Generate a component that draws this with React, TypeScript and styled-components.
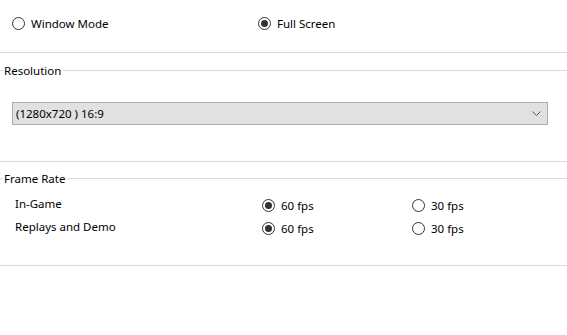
import { createGlobalStyle } from "styled-components";
import styled from "styled-components";

const GlobalStyle = createGlobalStyle`
  html, body {
    margin: 0;
    padding: 0;
    background: #ffffff;
  }
  body {
    font-family: "Noto Sans", "Open Sans", sans-serif;
    font-size: 11.5px;
    color: #000000;
  }
`;

const Page = styled.div`
  width: 567px;
  height: 335px;
  display: flex;
  flex-direction: column;
  background: #ffffff;
`;

const TopRow = styled.div`
  display: grid;
  grid-template-columns: 246px 1fr;
  align-items: center;
  align-content: start;
  height: 52px;
  box-sizing: border-box;
  padding: 17px 0 0 12px;
`;

const Divider = styled.div<{ $gap: number }>`
  height: 1px;
  background: #dadada;
  margin-top: ${(p) => p.$gap}px;
`;

const GroupHeader = styled.div<{ $gap: number }>`
  display: flex;
  align-items: center;
  height: 17px;
  margin-top: ${(p) => p.$gap}px;

  &::before {
    content: "";
    width: 3px;
    height: 1px;
    background: #dadada;
    margin-right: 1px;
  }
  &::after {
    content: "";
    flex: 1;
    height: 1px;
    background: #dadada;
    margin-left: 2px;
  }
`;

const GroupTitle = styled.span`
  line-height: 17px;
  white-space: nowrap;
`;

const RadioOption = styled.label`
  display: flex;
  align-items: center;
  gap: 6px;
  height: 13px;
  line-height: 13px;
  white-space: nowrap;
`;

const RadioCircle = styled.span<{ $checked?: boolean }>`
  width: 13px;
  height: 13px;
  box-sizing: border-box;
  border: 1px solid #333333;
  border-radius: 50%;
  display: flex;
  align-items: center;
  justify-content: center;
  flex: none;

  &::after {
    content: "";
    width: 7px;
    height: 7px;
    border-radius: 50%;
    background: ${(p) => (p.$checked ? "#333333" : "transparent")};
  }
`;

const SelectBox = styled.div`
  margin: 23px 0 0 12px;
  width: 536px;
  height: 23px;
  box-sizing: border-box;
  border: 1px solid #adadad;
  background: #e1e1e1;
  display: flex;
  align-items: center;
  justify-content: space-between;
  padding: 0 4px 0 3px;
`;

const SelectText = styled.span`
  line-height: 21px;
`;

const Chevron = styled.svg`
  width: 9px;
  height: 5px;
  margin-right: 2px;
`;

const FrameRows = styled.div`
  margin-top: 7px;
  display: flex;
  flex-direction: column;
  gap: 1px;
`;

const FrameRow = styled.div`
  display: grid;
  grid-template-columns: 247px 150px 1fr;
  align-items: center;
  height: 22px;
  padding-left: 15px;
`;

const RowLabel = styled.span`
  padding-bottom: 4px;
  white-space: nowrap;
`;

type RadioProps = { label: string; checked?: boolean };

const Radio = ({ label, checked }: RadioProps) => (
  <RadioOption>
    <RadioCircle $checked={checked} />
    <span>{label}</span>
  </RadioOption>
);

const frameRows = [
  { name: "In-Game", value: 60 },
  { name: "Replays and Demo", value: 60 },
];

export default function App() {
  return (
    <Page>
      <GlobalStyle />
      <TopRow>
        <Radio label="Window Mode" />
        <Radio label="Full Screen" checked />
      </TopRow>
      <Divider $gap={0} />

      <GroupHeader $gap={9}>
        <GroupTitle>Resolution</GroupTitle>
      </GroupHeader>
      <SelectBox>
        <SelectText>(1280x720 ) 16:9</SelectText>
        <Chevron viewBox="0 0 9 5">
          <path d="M0.5 0.5 L4.5 4.5 L8.5 0.5" fill="none" stroke="#555555" strokeWidth="1" />
        </Chevron>
      </SelectBox>
      <Divider $gap={36} />

      <GroupHeader $gap={8}>
        <GroupTitle>Frame Rate</GroupTitle>
      </GroupHeader>
      <FrameRows>
        {frameRows.map((row) => (
          <FrameRow key={row.name}>
            <RowLabel>{row.name}</RowLabel>
            <Radio label="60 fps" checked={row.value === 60} />
            <Radio label="30 fps" checked={row.value === 30} />
          </FrameRow>
        ))}
      </FrameRows>
      <Divider $gap={26} />
    </Page>
  );
}
